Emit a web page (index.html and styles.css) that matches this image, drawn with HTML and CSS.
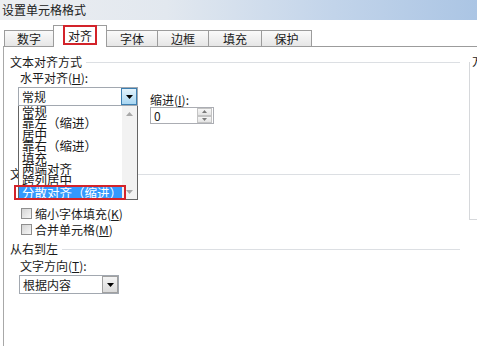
FILE: index.html
```html
<!DOCTYPE html>
<html lang="zh-CN">
<head>
    <meta charset="UTF-8">
    <meta name="viewport" content="width=device-width, initial-scale=1.0">
    <title>设置单元格格式</title>
    <link rel="stylesheet" href="styles.css">
</head>
<body>
    <div class="dialog">
        <div class="titlebar">设置单元格格式</div>

        <div class="tabs">
            <div class="tab tab-num">数字</div>
            <div class="tab tab-align active">对齐<span class="mark"></span></div>
            <div class="tab tab-font">字体</div>
            <div class="tab tab-border">边框</div>
            <div class="tab tab-fill">填充</div>
            <div class="tab tab-protect">保护</div>
        </div>

        <div class="panel">
            <div class="main">
                <div class="group-head"><span>文本对齐方式</span><i class="rule"></i></div>
                <div class="group-body">
                    <div class="label">水平对齐(<u>H</u>):</div>
                    <div class="align-row">
                        <div class="combo-wrap">
                            <div class="combo combo-wide">
                                <span class="combo-text">常规</span>
                                <span class="combo-btn combo-btn-hot">
                                    <svg width="7" height="4" viewBox="0 0 7 4"><path d="M0 0H7L3.5 4Z" fill="#000"/></svg>
                                </span>
                            </div>
                            <div class="droplist">
                                <ul class="items">
                                    <li>常规</li>
                                    <li>靠左（缩进）</li>
                                    <li>居中</li>
                                    <li>靠右（缩进）</li>
                                    <li>填充</li>
                                    <li>两端对齐</li>
                                    <li>跨列居中</li>
                                    <li class="selected">分散对齐（缩进）<span class="mark"></span></li>
                                </ul>
                                <div class="scrollbar">
                                    <svg width="7" height="4" viewBox="0 0 7 4"><path d="M0 4H7L3.5 0Z" fill="#a8a8a8"/></svg>
                                    <svg width="7" height="4" viewBox="0 0 7 4"><path d="M0 0H7L3.5 4Z" fill="#a8a8a8"/></svg>
                                </div>
                            </div>
                        </div>
                        <div class="indent">
                            <div class="label">缩进(<u>I</u>):</div>
                            <div class="spin">
                                <span class="spin-val">0</span>
                                <span class="spin-btns">
                                    <i><svg width="5" height="3" viewBox="0 0 5 3"><path d="M0 3H5L2.5 0Z" fill="#7a7a7a"/></svg></i>
                                    <i><svg width="5" height="3" viewBox="0 0 5 3"><path d="M0 0H5L2.5 3Z" fill="#7a7a7a"/></svg></i>
                                </span>
                            </div>
                        </div>
                    </div>
                    <div class="label label-v">垂直对齐(<u>V</u>):</div>
                    <div class="combo combo-wide">
                        <span class="combo-text">居中</span>
                    </div>
                </div>

                <div class="group-head head-ctrl"><span>文本控制</span><i class="rule"></i></div>
                <div class="group-body">
                    <div class="check check-first"><i class="box"></i>缩小字体填充(<u>K</u>)</div>
                    <div class="check"><i class="box"></i>合并单元格(<u>M</u>)</div>
                </div>

                <div class="group-head head-rtl"><span>从右到左</span><i class="rule"></i></div>
                <div class="group-body">
                    <div class="label label-dir">文字方向(<u>T</u>):</div>
                    <div class="combo combo-dir">
                        <span class="combo-text">根据内容</span>
                        <span class="combo-btn">
                            <svg width="7" height="4" viewBox="0 0 7 4"><path d="M0 0H7L3.5 4Z" fill="#000"/></svg>
                        </span>
                    </div>
                </div>
            </div>

            <div class="orient">
                <span class="orient-title">方向</span>
            </div>
        </div>
    </div>
</body>
</html>
```

FILE: styles.css
```css
* {
    box-sizing: border-box;
}
body {
    margin: 0;
    width: 477px;
    height: 346px;
    overflow: hidden;
    font-family: "Noto Sans CJK SC", "Microsoft YaHei", sans-serif;
    font-size: 12px;
    color: #1a1a1a;
    background: #fff;
}
u {
    text-decoration: underline;
}
.dialog {
    width: 477px;
    height: 346px;
    overflow: hidden;
    background: #fff;
}
.titlebar {
    height: 20px;
    padding-left: 2px;
    line-height: 20px;
    color: #202020;
    background: linear-gradient(to right, #eceef1 0%, #e2e8ef 35%, #c2d4ea 70%, #abc5e4 100%);
}
.tabs {
    display: flex;
    align-items: flex-end;
    height: 26px;
    padding-left: 4px;
}
.tab {
    position: relative;
    height: 16px;
    margin-left: -1px;
    border: 1px solid #9c9c9c;
    border-bottom: none;
    text-align: center;
    line-height: 15px;
    background: linear-gradient(#fafafa, #e6e6e6);
}
.tab-num { width: 50px; margin-left: 0; }
.tab-align { width: 54px; }
.tab-font { width: 52px; }
.tab-border { width: 52px; }
.tab-fill { width: 54px; }
.tab-protect { width: 51px; }
.tab.active {
    z-index: 2;
    height: 22px;
    margin-bottom: -1px;
    line-height: 19px;
    background: #fff;
}
.tab .mark {
    position: absolute;
    left: 9px;
    top: -1px;
    width: 34px;
    height: 20px;
    border: 2px solid #d3232a;
}
.panel {
    display: flex;
    height: 300px;
    border-top: 1px solid #9c9c9c;
    border-left: 1px solid #a8a8a8;
    margin-left: 3px;
}
.main {
    width: 456px;
    flex-shrink: 0;
    padding-left: 6px;
}
.group-head {
    display: flex;
    align-items: center;
    height: 14px;
    margin-top: 8px;
    line-height: 14px;
}
.group-head .rule {
    flex: 1;
    height: 1px;
    margin-left: 4px;
    background: #dcdfe3;
}
.head-ctrl { margin-top: 6px; }
.head-rtl { margin-top: 5px; }
.group-body {
    padding-left: 10px;
}
.label {
    height: 14px;
    margin-top: 2px;
    line-height: 14px;
}
.label-v { margin-top: 4px; }
.label-dir { margin-top: 3px; }
.align-row {
    display: flex;
    margin-top: 2px;
}
.combo-wrap {
    position: relative;
    z-index: 3;
}
.combo {
    display: flex;
    align-items: center;
    height: 19px;
    margin-left: -2px;
    border: 1px solid #a2a8b0;
    background: #fff;
}
.combo-wide {
    width: 120px;
}
.combo-dir {
    width: 100px;
    margin-top: 2px;
    margin-left: -1px;
}
.combo-text {
    flex: 1;
    padding-left: 3px;
    line-height: 17px;
}
.combo-btn {
    display: flex;
    align-items: center;
    justify-content: center;
    width: 16px;
    height: 17px;
    border: 1px solid #a0a0a0;
    background: linear-gradient(#f4f4f4, #dadada);
}
.combo-btn-hot {
    border-color: #3c7fb1;
    background: linear-gradient(#e3f3fc, #a8d6f2);
}
.droplist {
    position: absolute;
    left: -2px;
    top: 19px;
    display: flex;
    width: 120px;
    height: 94px;
    border: 1px solid #646464;
    border-top: none;
    background: #fff;
}
.items {
    flex: 1;
    margin: 0;
    padding: 0;
    list-style: none;
}
.items li {
    height: 11.4px;
    padding-left: 3px;
    line-height: 11.4px;
    font-size: 12.5px;
    white-space: nowrap;
}
.items li.selected {
    position: relative;
    height: 13px;
    line-height: 13px;
    color: #fff;
    background: #3399ff;
}
.items li .mark {
    position: absolute;
    left: -5px;
    top: -1px;
    width: 112px;
    height: 15px;
    border: 2px solid #d3232a;
}
.scrollbar {
    display: flex;
    flex-direction: column;
    justify-content: space-between;
    align-items: center;
    width: 16px;
    padding: 6px 0 5px;
    background: #f2f2f2;
}
.indent {
    margin-left: 12px;
    margin-top: 4px;
}
.spin {
    display: flex;
    align-items: center;
    width: 64px;
    height: 17px;
    border: 1px solid #abadb3;
    background: #fff;
}
.spin-val {
    flex: 1;
    padding-left: 3px;
    line-height: 15px;
}
.spin-btns {
    display: flex;
    flex-direction: column;
    width: 15px;
    height: 15px;
    margin-right: 1px;
}
.spin-btns i {
    display: flex;
    align-items: center;
    justify-content: center;
    flex: 1;
    border: 1px solid #c4c4c4;
    background: linear-gradient(#f6f6f6, #e4e4e4);
}
.check {
    display: flex;
    align-items: center;
    height: 16px;
}
.check-first {
    margin-top: 24px;
}
.check .box {
    width: 11px;
    height: 11px;
    margin-left: 1px;
    margin-right: 3px;
    border: 1px solid #8f8f8f;
    background: linear-gradient(135deg, #d4d4d4, #f7f7f7);
}
.orient {
    position: relative;
    flex-shrink: 0;
    width: 60px;
    height: 158px;
    margin-top: 15px;
    margin-left: 9px;
    border-left: 1px solid #d6d8db;
    border-bottom: 1px solid #d6d8db;
}
.orient-title {
    position: absolute;
    left: 2px;
    top: -8px;
    line-height: 14px;
    background: #fff;
}
```
